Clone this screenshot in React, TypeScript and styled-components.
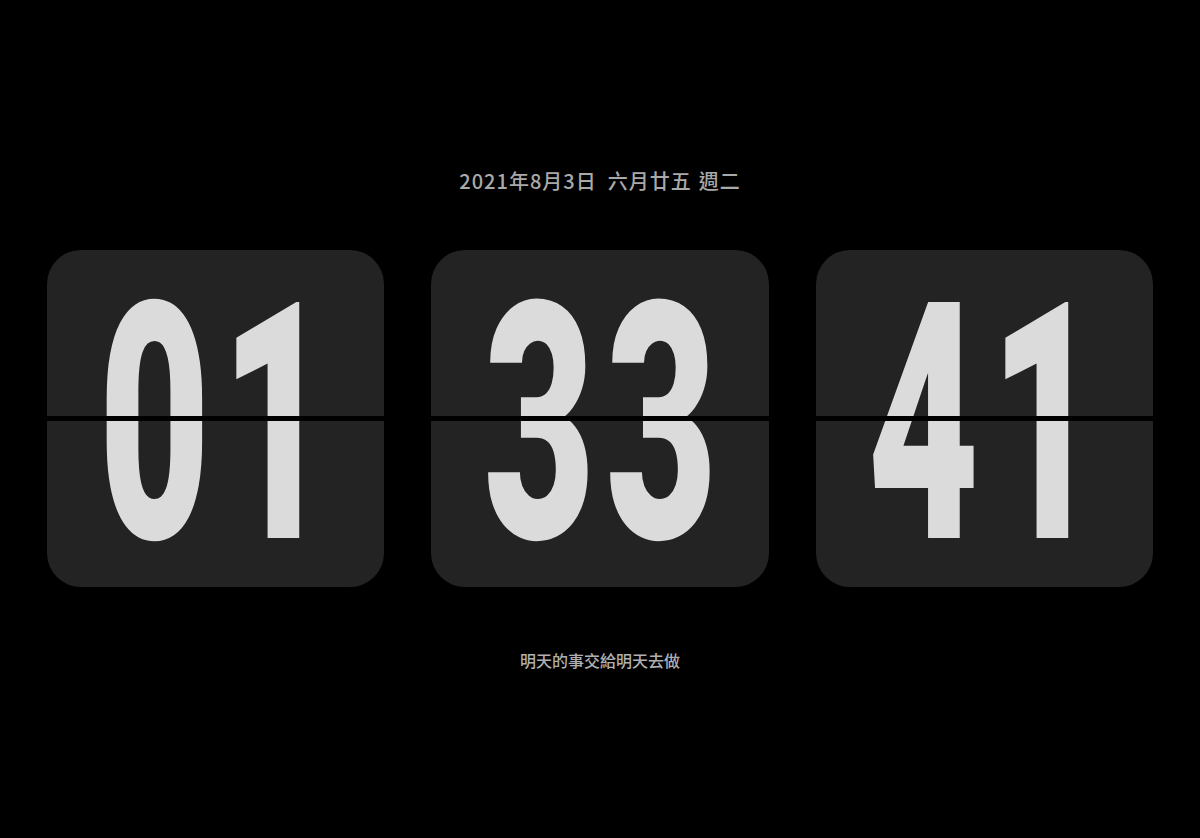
import styled, { createGlobalStyle } from "styled-components";

const GlobalStyle = createGlobalStyle`
  html, body {
    margin: 0;
    padding: 0;
    background: #000;
  }
  body {
    font-family: "Noto Sans CJK TC", "Noto Sans", sans-serif;
  }
`;

const time = ["01", "33", "41"];

export default function App() {
  return (
    <>
      <GlobalStyle />
      <Page>
        <DateLine>
          <span>2021年8月3日</span>
          <Lunar>六月廿五</Lunar>
          <Weekday>週二</Weekday>
        </DateLine>
        <CardRow>
          {time.map((value, i) => (
            <Card key={i}>
              <Digits>{value}</Digits>
            </Card>
          ))}
        </CardRow>
        <Motto>明天的事交給明天去做</Motto>
      </Page>
    </>
  );
}

const Page = styled.main`
  box-sizing: border-box;
  height: 838px;
  padding-top: 167px;
  display: flex;
  flex-direction: column;
  align-items: center;
  overflow: hidden;
`;

const DateLine = styled.div`
  display: flex;
  align-items: center;
  font-size: 20px;
  line-height: 28px;
  font-weight: 500;
  letter-spacing: 1px;
  color: #a9a9a9;
`;

const Lunar = styled.span`
  margin-left: 11px;
`;

const Weekday = styled.span`
  margin-left: 7px;
`;

const CardRow = styled.div`
  box-sizing: border-box;
  width: 100%;
  margin-top: 55px;
  padding: 0 47px;
  display: flex;
  gap: 47px;
`;

const Card = styled.div`
  position: relative;
  flex: 1;
  height: 337px;
  border-radius: 34px;
  background: #232323;
  display: flex;
  align-items: center;
  justify-content: center;
  overflow: hidden;

  &::after {
    content: "";
    position: absolute;
    left: 0;
    right: 0;
    top: 166px;
    height: 5px;
    background: #000;
  }
`;

const Digits = styled.span`
  display: inline-block;
  padding-left: 18px;
  font-family: Roboto, "Liberation Sans", sans-serif;
  font-weight: 900;
  font-size: 332px;
  line-height: 1;
  letter-spacing: 18px;
  color: #dbdbdb;
  transform: translateY(6px) scaleX(0.58);
`;

const Motto = styled.div`
  margin-top: 61px;
  font-size: 16px;
  line-height: 24px;
  font-weight: 500;
  color: #b0b0b0;
`;
